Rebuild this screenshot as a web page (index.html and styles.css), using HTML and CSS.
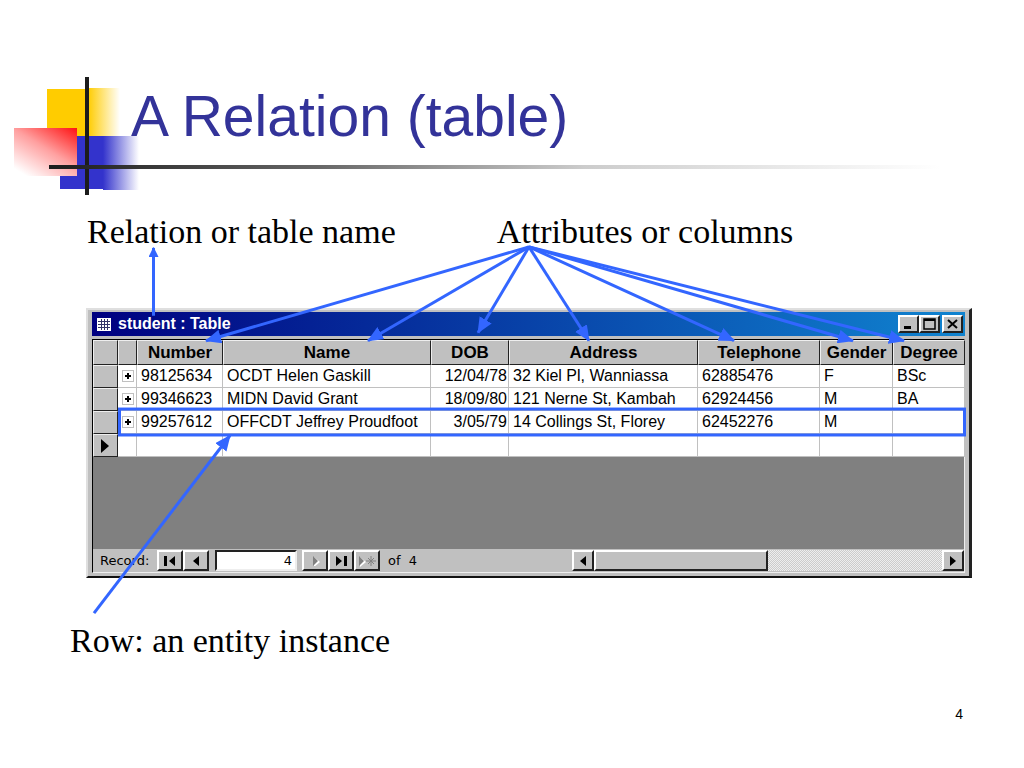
FILE: index.html
```html
<!DOCTYPE html>
<html lang="en">
<head>
    <meta charset="UTF-8">
    <meta name="viewport" content="width=device-width, initial-scale=1.0">
    <title>A Relation (table)</title>
    <link rel="stylesheet" href="styles.css">
</head>
<body>
    <header class="slide-header">
        <!-- Coloured squares behind the title -->
        <svg class="squares" width="150" height="200" viewBox="0 0 150 200" aria-hidden="true">
            <defs>
                <linearGradient id="yellowFade">
                    <stop offset="0" stop-color="#ffcc00"/>
                    <stop offset="1" stop-color="#ffffff"/>
                </linearGradient>
                <linearGradient id="blueFade">
                    <stop offset="0" stop-color="#3333cc"/>
                    <stop offset="1" stop-color="#ffffff"/>
                </linearGradient>
                <linearGradient id="redFade" x1="1" y1="0" x2="0.2" y2="1">
                    <stop offset="0" stop-color="#ff1111"/>
                    <stop offset="0.5" stop-color="#ffa0a0"/>
                    <stop offset="1" stop-color="#ffffff"/>
                </linearGradient>
            </defs>
            <rect x="47" y="89" width="42" height="47" fill="#ffcc00"/>
            <rect x="88" y="88" width="32" height="48" fill="url(#yellowFade)"/>
            <rect x="60" y="136" width="44" height="53" fill="#3333cc"/>
            <rect x="103" y="136" width="36" height="54" fill="url(#blueFade)"/>
            <rect x="14" y="128" width="63" height="48" fill="url(#redFade)"/>
            <rect x="85" y="77" width="4" height="118" fill="#1c1c1c"/>
        </svg>
        <h1>A Relation (table)</h1>
        <div class="rule"></div>
    </header>

    <main class="figure">
        <div class="labels">
            <span>Relation or table name</span>
            <span>Attributes or columns</span>
        </div>

        <!-- Access window -->
        <section class="window">
            <div class="titlebar">
                <svg width="14" height="13" viewBox="0 0 14 13" aria-hidden="true">
                    <rect width="14" height="13" fill="#ffffff"/>
                    <path d="M1 3.500h12M1 6.500h12M1 9.500h12M4.500 1v11M7.500 1v11M10.500 1v11" stroke="#333366"/>
                </svg>
                <span class="title">student : Table</span>
                <button class="bevel" aria-label="Minimize"><svg width="14" height="12" viewBox="0 0 14 12"><path d="M2 9.500h7" stroke="#000" stroke-width="3"/></svg></button>
                <button class="bevel" aria-label="Maximize"><svg width="14" height="12" viewBox="0 0 14 12"><path d="M1 1h11v10H1z" fill="none" stroke="#000" stroke-width="1.500"/><path d="M1 2h11" stroke="#000" stroke-width="2"/></svg></button>
                <button class="bevel close" aria-label="Close"><svg width="14" height="12" viewBox="0 0 14 12"><path d="M2 2l9 8M11 2l-9 8" stroke="#000" stroke-width="2"/></svg></button>
            </div>

            <div class="sheet">
                <table>
                    <colgroup>
                        <col class="c-select"><col class="c-expand"><col class="c-number"><col class="c-name"><col class="c-dob"><col class="c-address"><col class="c-phone"><col class="c-gender"><col class="c-degree">
                    </colgroup>
                    <thead>
                        <tr><th></th><th></th><th>Number</th><th>Name</th><th>DOB</th><th>Address</th><th>Telephone</th><th>Gender</th><th>Degree</th></tr>
                    </thead>
                    <tbody>
                        <tr><th></th><td class="expand"><button aria-label="Expand"></button></td><td>98125634</td><td>OCDT Helen Gaskill</td><td class="date">12/04/78</td><td>32 Kiel Pl, Wanniassa</td><td>62885476</td><td>F</td><td>BSc</td></tr>
                        <tr><th></th><td class="expand"><button aria-label="Expand"></button></td><td>99346623</td><td>MIDN David Grant</td><td class="date">18/09/80</td><td>121 Nerne St, Kambah</td><td>62924456</td><td>M</td><td>BA</td></tr>
                        <tr><th></th><td class="expand"><button aria-label="Expand"></button></td><td>99257612</td><td>OFFCDT Jeffrey Proudfoot</td><td class="date">3/05/79</td><td>14 Collings St, Florey</td><td>62452276</td><td>M</td><td></td></tr>
                        <tr><th><svg width="9" height="14" viewBox="0 0 9 14"><path d="M0 0l8 7-8 7z"/></svg></th><td></td><td></td><td></td><td></td><td></td><td></td><td></td><td></td></tr>
                    </tbody>
                </table>

                <div class="navbar">
                    <label for="record">Record:</label>
                    <button class="bevel" aria-label="First record"><svg width="14" height="10" viewBox="0 0 14 10"><path d="M1 0h3v10H1zM12 0v10L6 5z"/></svg></button>
                    <button class="bevel" aria-label="Previous record"><svg width="14" height="10" viewBox="0 0 14 10"><path d="M10 0v10L4 5z"/></svg></button>
                    <input id="record" type="text" value="4">
                    <button class="bevel" aria-label="Next record" disabled><svg width="14" height="10" viewBox="0 0 14 10"><path d="M6 1v10l6-5z" fill="#fff"/><path d="M5 0v10l5-5z" fill="#808080"/></svg></button>
                    <button class="bevel" aria-label="Last record"><svg width="14" height="10" viewBox="0 0 14 10"><path d="M2 0v10l6-5zM10 0h3v10h-3z"/></svg></button>
                    <button class="bevel" aria-label="New record" disabled><svg width="20" height="12" viewBox="0 0 20 12"><path d="M3 2v10l6-5z" fill="#fff"/><path d="M2 1v10l5-5z" fill="#808080"/><path d="M14 1v10M9 6h10M11 3l6 6M17 3l-6 6" stroke="#808080"/></svg></button>
                    <span class="total">of&nbsp; 4</span>
                    <div class="scrollbar">
                        <button class="bevel" aria-label="Scroll left"><svg width="6" height="10" viewBox="0 0 6 10"><path d="M6 0v10L0 5z"/></svg></button>
                        <div class="track"><div class="thumb bevel"></div></div>
                        <button class="bevel" aria-label="Scroll right"><svg width="6" height="10" viewBox="0 0 6 10"><path d="M0 0v10l6-5z"/></svg></button>
                    </div>
                </div>
            </div>
        </section>

        <p class="caption">Row: an entity instance</p>

        <!-- Arrows from the labels to the parts of the table -->
        <svg class="arrows" viewBox="0 200 1024 462" preserveAspectRatio="none" aria-hidden="true">
            <defs>
                <marker id="head" markerUnits="userSpaceOnUse" markerWidth="16" markerHeight="14" refX="15" refY="7" orient="auto">
                    <path d="M0 0l16 7-16 7z" fill="#3366ff"/>
                </marker>
                <marker id="smallHead" markerUnits="userSpaceOnUse" markerWidth="10" markerHeight="10" refX="9" refY="5" orient="auto">
                    <path d="M0 0l10 5-10 5z" fill="#3366ff"/>
                </marker>
            </defs>
            <path d="M153.500 316V248" marker-end="url(#smallHead)"/>
            <path d="M529 247L206 341" marker-end="url(#head)"/>
            <path d="M529 247L368 341" marker-end="url(#head)"/>
            <path d="M529 247L478 333" marker-end="url(#head)"/>
            <path d="M529 247L589 341" marker-end="url(#head)"/>
            <path d="M529 247L734 341" marker-end="url(#head)"/>
            <path d="M529 247L853 341" marker-end="url(#head)"/>
            <path d="M529 247L904 341" marker-end="url(#head)"/>
            <path d="M94 614L230 436" marker-end="url(#head)"/>
            <rect x="119.500" y="409.500" width="845" height="26"/>
        </svg>
    </main>

    <footer>4</footer>
</body>
</html>
```
FILE: styles.css
```css
* {
    box-sizing: border-box;
}

body {
    margin: 0;
    background: white;
    color: black;
    font-family: "Liberation Sans", Arial, sans-serif;
}

button {
    font: inherit;
    padding: 0;
}

/* Header */
.slide-header {
    position: relative;
    height: 200px;
    padding: 84px 60px 0 131px;
}

.squares {
    position: absolute;
    left: 0;
    top: 0;
}

h1 {
    position: relative;
    margin: 0;
    font-size: 57px;
    font-weight: normal;
    line-height: 64px;
    color: #333399;
}

.rule {
    position: absolute;
    left: 49px;
    right: 84px;
    top: 165px;
    height: 4px;
    background: linear-gradient(to right, #1c1c1c, #666666 30%, #cccccc 60%, #ffffff);
}

/* Figure */
.figure {
    position: relative;
    padding-top: 12px;
}

.labels {
    display: flex;
    gap: 101px;
    padding-left: 87px;
}

.labels,
.caption {
    font-family: "Liberation Serif", "Times New Roman", serif;
    font-size: 34px;
    line-height: 40px;
}

.caption {
    margin: 43px 0 0;
    padding-left: 70px;
}

.arrows {
    position: absolute;
    left: 0;
    top: 0;
    width: 100%;
    height: 100%;
    fill: none;
    stroke: #3366ff;
    stroke-width: 3;
    pointer-events: none;
}

.arrows marker {
    stroke: none;
}

/* Window */
.window {
    margin: 56px 52px 0 86px;
    padding: 2px 4px 3px 4px;
    background: #c0c0c0;
    border: 2px solid #dfdfdf;
    border-right: 3px solid #222222;
    border-bottom: 2px solid #111111;
}

.titlebar {
    display: flex;
    align-items: center;
    height: 24px;
    padding: 0 2px 0 5px;
    background: linear-gradient(to right, #000080, #1084d0);
    color: white;
    font-size: 16px;
    font-weight: bold;
}

.title {
    flex: 1;
    padding-left: 7px;
}

.bevel {
    display: flex;
    align-items: center;
    justify-content: center;
    background: #c0c0c0;
    border: 2px solid;
    border-color: #ffffff #222222 #222222 #ffffff;
}

.titlebar .bevel {
    width: 21px;
    height: 18px;
}

.titlebar .close {
    margin-left: 2px;
}

.sheet {
    margin-top: 3px;
    border: 1px solid;
    border-color: #000000 #eeeeee #eeeeee #000000;
    background: #808080;
}

/* Datasheet */
table {
    width: 100%;
    table-layout: fixed;
    border-collapse: separate;
    border-spacing: 0;
    font-size: 16px;
    line-height: 18px;
}

.c-select { width: 25px; }
.c-expand { width: 19px; }
.c-number { width: 86px; }
.c-name { width: 208px; }
.c-dob { width: 78px; }
.c-address { width: 189px; }
.c-phone { width: 122px; }
.c-gender { width: 73px; }
.c-degree { width: 72px; }

th,
td {
    height: 23px;
    padding: 0 0 0 4px;
    white-space: nowrap;
    text-align: left;
}

th {
    padding: 0;
    background: #c0c0c0;
    border: 1px solid;
    border-color: #eeeeee #222222 #222222 #eeeeee;
    text-align: center;
}

thead th {
    height: 25px;
    font-size: 17px;
}

td {
    background: white;
    border-right: 1px solid #c0c0c0;
    border-bottom: 1px solid #c0c0c0;
}

th svg {
    display: block;
    margin: 0 auto;
}

.date {
    padding: 0 1px 0 0;
    text-align: right;
}

.expand {
    padding: 0 0 0 4px;
}

.expand button {
    display: block;
    width: 12px;
    height: 12px;
    border: 1px solid #c0c0c0;
    background:
        linear-gradient(black, black) center / 6px 2px no-repeat,
        linear-gradient(black, black) center / 2px 6px no-repeat,
        white;
}

/* Record navigation */
.navbar {
    display: flex;
    align-items: center;
    height: 23px;
    margin-top: 92px;
    padding-left: 7px;
    background: #c0c0c0;
    font-family: "DejaVu Sans", Verdana, sans-serif;
    font-size: 13px;
}

.navbar label {
    width: 57px;
}

.navbar .bevel {
    width: 26px;
    height: 21px;
}

.navbar input {
    width: 82px;
    height: 21px;
    margin: 0 5px 0 6px;
    padding: 0 3px 0 0;
    border: 2px solid;
    border-color: #222222 #eeeeee #eeeeee #222222;
    background: white;
    font: inherit;
    text-align: right;
}

.total {
    padding-left: 8px;
}

.scrollbar {
    display: flex;
    width: 392px;
    margin-left: auto;
}

.navbar .scrollbar .bevel {
    width: 22px;
}

.track {
    flex: 1;
    background: repeating-conic-gradient(#cccccc 0 25%, #eeeeee 0 50%) 0 0 / 2px 2px;
}

.navbar .scrollbar .thumb {
    width: 50%;
}

/* Page number */
footer {
    padding: 45px 61px 0 0;
    font-size: 14px;
    line-height: 16px;
    text-align: right;
}
```
